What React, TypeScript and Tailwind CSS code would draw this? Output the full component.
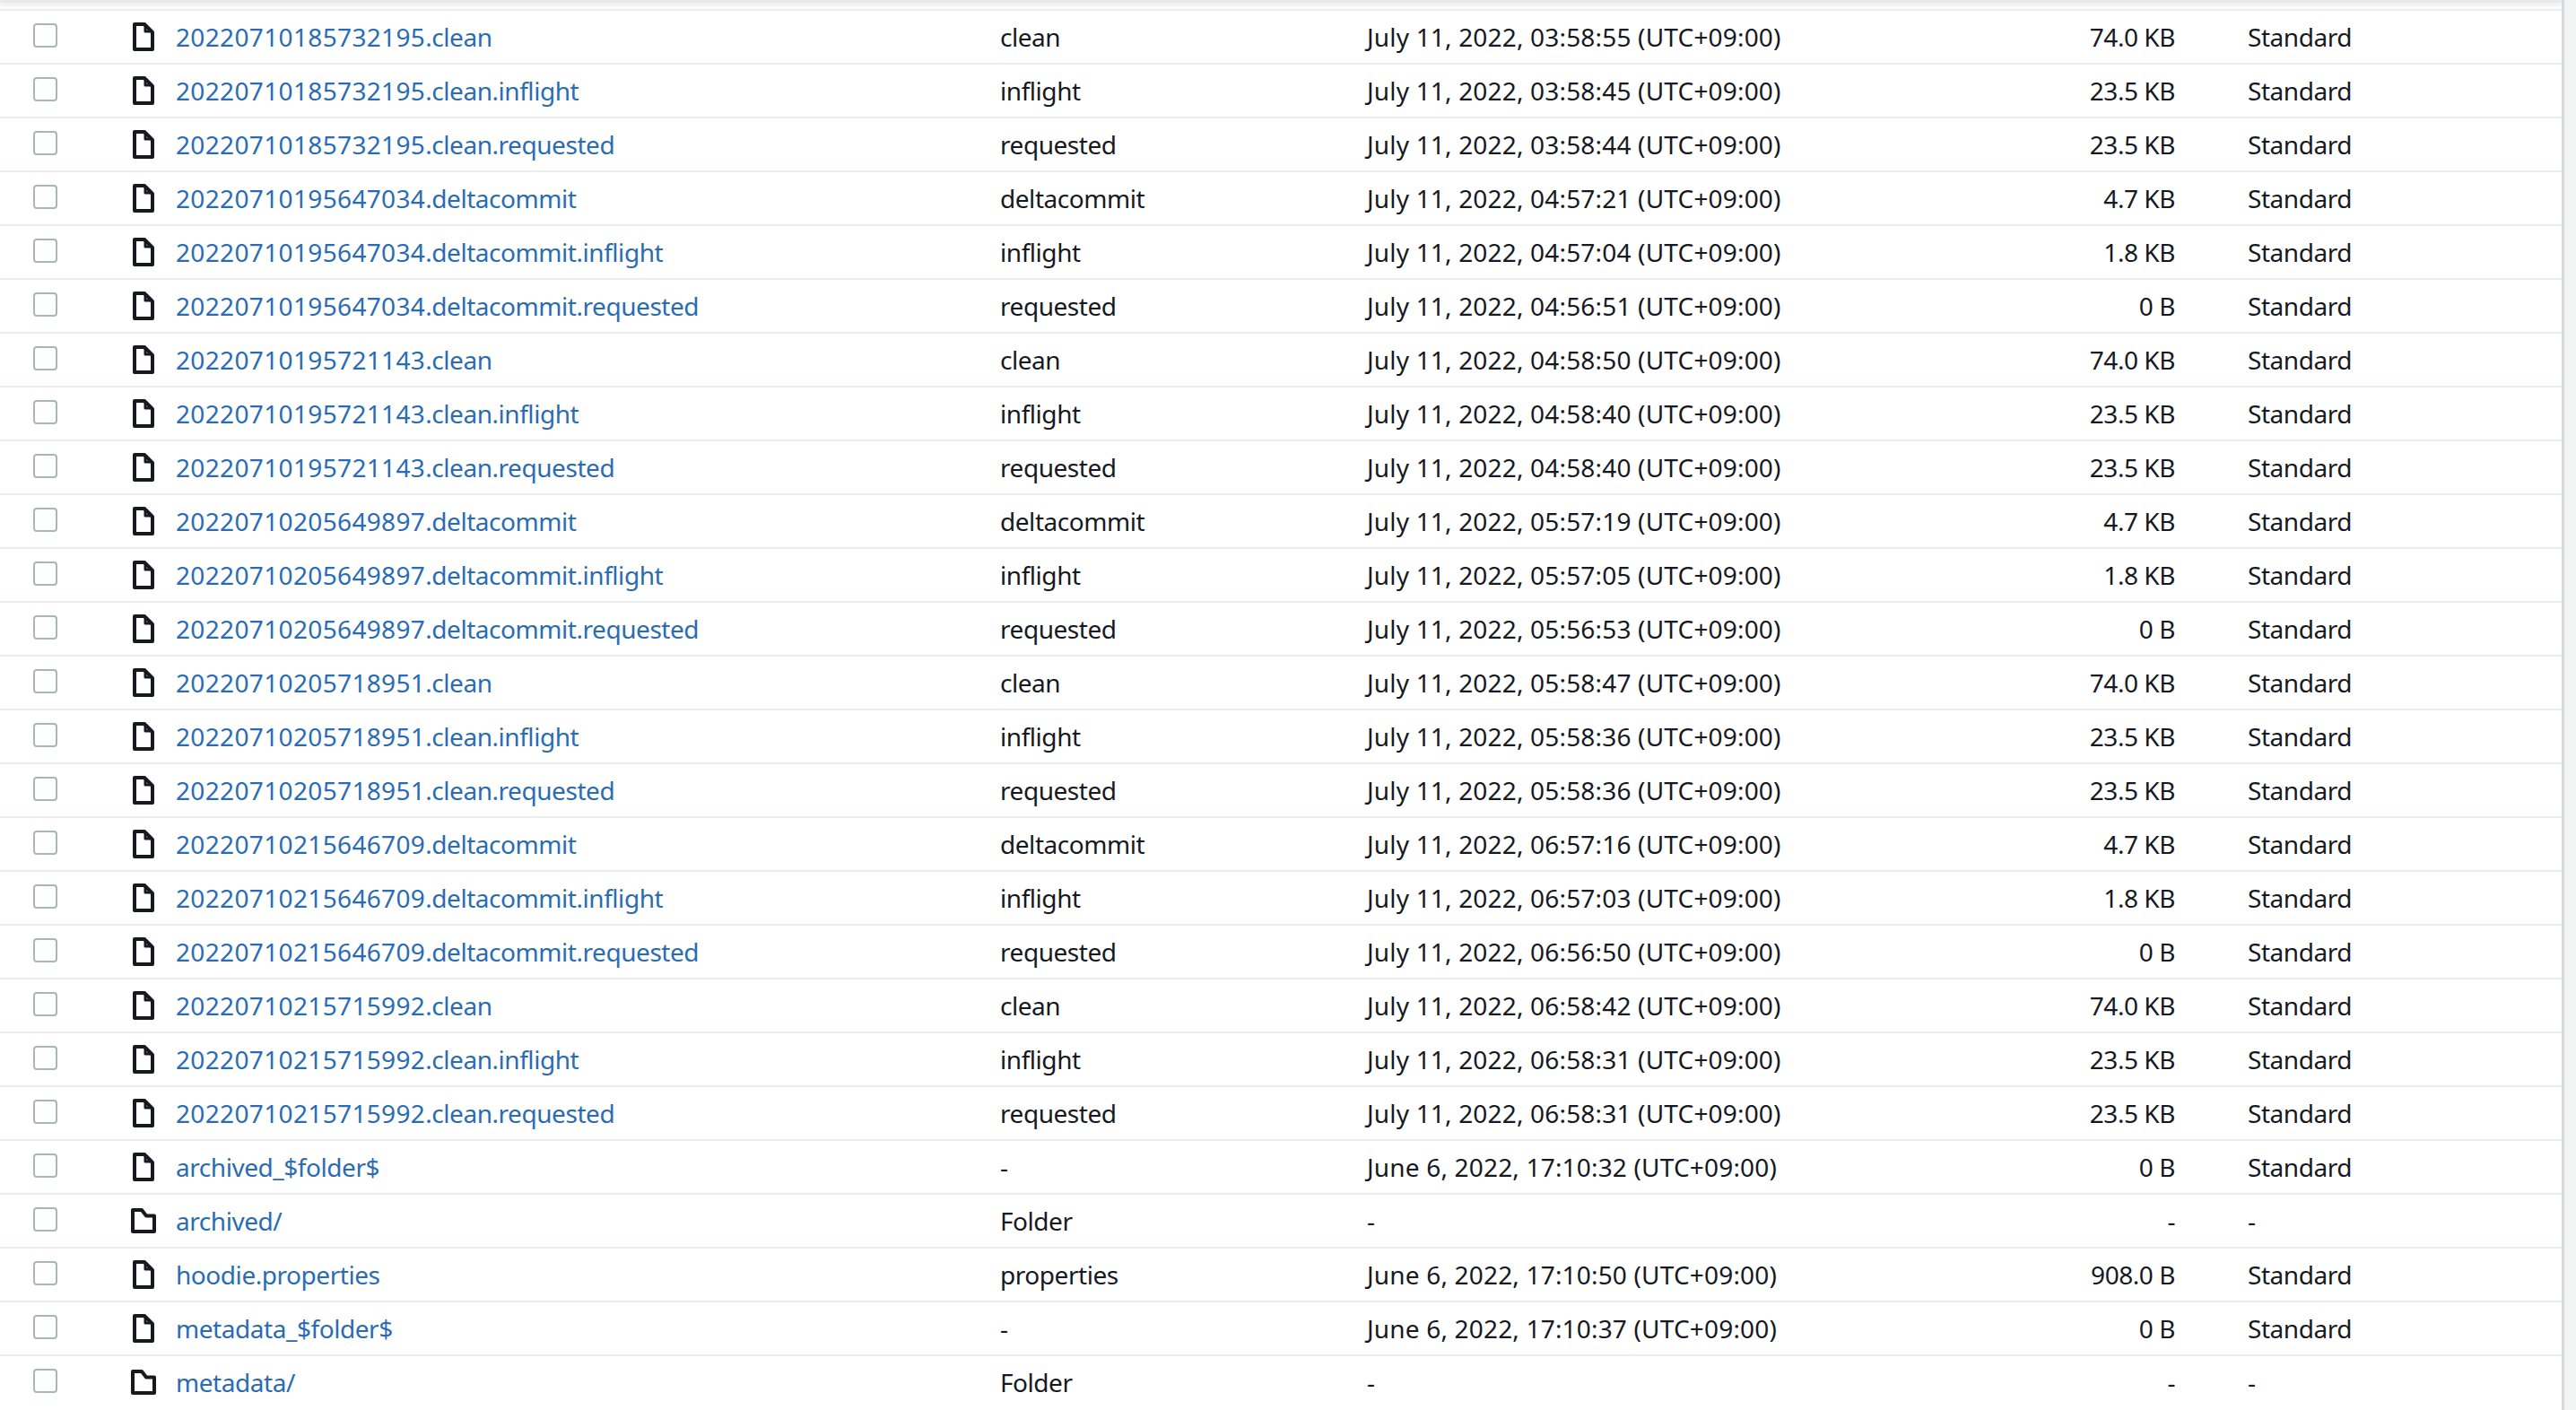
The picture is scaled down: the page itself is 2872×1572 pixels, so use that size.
const rows: [string, string, string, string, string, 'file' | 'folder'][] = [
  ['20220710185732195.clean', 'clean', 'July 11, 2022, 03:58:55 (UTC+09:00)', '74.0 KB', 'Standard', 'file'],
  ['20220710185732195.clean.inflight', 'inflight', 'July 11, 2022, 03:58:45 (UTC+09:00)', '23.5 KB', 'Standard', 'file'],
  ['20220710185732195.clean.requested', 'requested', 'July 11, 2022, 03:58:44 (UTC+09:00)', '23.5 KB', 'Standard', 'file'],
  ['20220710195647034.deltacommit', 'deltacommit', 'July 11, 2022, 04:57:21 (UTC+09:00)', '4.7 KB', 'Standard', 'file'],
  ['20220710195647034.deltacommit.inflight', 'inflight', 'July 11, 2022, 04:57:04 (UTC+09:00)', '1.8 KB', 'Standard', 'file'],
  ['20220710195647034.deltacommit.requested', 'requested', 'July 11, 2022, 04:56:51 (UTC+09:00)', '0 B', 'Standard', 'file'],
  ['20220710195721143.clean', 'clean', 'July 11, 2022, 04:58:50 (UTC+09:00)', '74.0 KB', 'Standard', 'file'],
  ['20220710195721143.clean.inflight', 'inflight', 'July 11, 2022, 04:58:40 (UTC+09:00)', '23.5 KB', 'Standard', 'file'],
  ['20220710195721143.clean.requested', 'requested', 'July 11, 2022, 04:58:40 (UTC+09:00)', '23.5 KB', 'Standard', 'file'],
  ['20220710205649897.deltacommit', 'deltacommit', 'July 11, 2022, 05:57:19 (UTC+09:00)', '4.7 KB', 'Standard', 'file'],
  ['20220710205649897.deltacommit.inflight', 'inflight', 'July 11, 2022, 05:57:05 (UTC+09:00)', '1.8 KB', 'Standard', 'file'],
  ['20220710205649897.deltacommit.requested', 'requested', 'July 11, 2022, 05:56:53 (UTC+09:00)', '0 B', 'Standard', 'file'],
  ['20220710205718951.clean', 'clean', 'July 11, 2022, 05:58:47 (UTC+09:00)', '74.0 KB', 'Standard', 'file'],
  ['20220710205718951.clean.inflight', 'inflight', 'July 11, 2022, 05:58:36 (UTC+09:00)', '23.5 KB', 'Standard', 'file'],
  ['20220710205718951.clean.requested', 'requested', 'July 11, 2022, 05:58:36 (UTC+09:00)', '23.5 KB', 'Standard', 'file'],
  ['20220710215646709.deltacommit', 'deltacommit', 'July 11, 2022, 06:57:16 (UTC+09:00)', '4.7 KB', 'Standard', 'file'],
  ['20220710215646709.deltacommit.inflight', 'inflight', 'July 11, 2022, 06:57:03 (UTC+09:00)', '1.8 KB', 'Standard', 'file'],
  ['20220710215646709.deltacommit.requested', 'requested', 'July 11, 2022, 06:56:50 (UTC+09:00)', '0 B', 'Standard', 'file'],
  ['20220710215715992.clean', 'clean', 'July 11, 2022, 06:58:42 (UTC+09:00)', '74.0 KB', 'Standard', 'file'],
  ['20220710215715992.clean.inflight', 'inflight', 'July 11, 2022, 06:58:31 (UTC+09:00)', '23.5 KB', 'Standard', 'file'],
  ['20220710215715992.clean.requested', 'requested', 'July 11, 2022, 06:58:31 (UTC+09:00)', '23.5 KB', 'Standard', 'file'],
  ['archived_$folder$', '-', 'June 6, 2022, 17:10:32 (UTC+09:00)', '0 B', 'Standard', 'file'],
  ['archived/', 'Folder', '-', '-', '-', 'folder'],
  ['hoodie.properties', 'properties', 'June 6, 2022, 17:10:50 (UTC+09:00)', '908.0 B', 'Standard', 'file'],
  ['metadata_$folder$', '-', 'June 6, 2022, 17:10:37 (UTC+09:00)', '0 B', 'Standard', 'file'],
  ['metadata/', 'Folder', '-', '-', '-', 'folder'],
];

function FileIcon() {
  return (
    <svg className="ml-[2px]" width="24" height="32" viewBox="0 0 24 32" fill="none" stroke="#16191f" strokeWidth="4" strokeLinejoin="round">
      <path d="M2 2h11l9 9v19H2z" />
      <path d="M14 2v8h8" strokeWidth="3" />
    </svg>
  );
}

function FolderIcon() {
  return (
    <svg width="28" height="28" viewBox="0 0 28 28" fill="none" stroke="#16191f" strokeWidth="4" strokeLinejoin="round">
      <path d="M2 2h10l5 6.4h9V26H2z" />
    </svg>
  );
}

function Name({ value }: { value: string }) {
  const match = value.match(/^(\d+)(.*)$/);
  if (!match) return <span>{value}</span>;
  return (
    <>
      <span className="tracking-[0.35px]">{match[1]}</span>
      <span>{match[2]}</span>
    </>
  );
}

export default function App() {
  return (
    <div className="flex h-[1572px] w-full overflow-hidden bg-white font-['Noto_Sans',sans-serif] text-[28px] tracking-[-0.45px] text-[#16191f]">
      <div className="min-w-0 flex-1">
        <div className="h-[3px] bg-[#e8e8e8] shadow-[0_2px_6px_rgba(0,0,0,0.18)]" />
        <div className="h-[7px]" />
        {rows.map((r) => (
          <div key={r[0]} className="flex h-[60px] items-center border-t-2 border-[#eaeded]">
            <div className="flex w-[146px] shrink-0 pb-[3px] pl-[37px]">
              <div className="h-[27px] w-[27px] rounded-[4px] border-2 border-[#aab7b8] bg-white" />
            </div>
            <div className="flex w-[50px] shrink-0">
              {r[5] === 'file' ? <FileIcon /> : <FolderIcon />}
            </div>
            <a className="w-[919px] shrink-0 whitespace-nowrap text-[#2a6cb3]">
              <Name value={r[0]} />
            </a>
            <div className="w-[409px] shrink-0 whitespace-nowrap">{r[1]}</div>
            <div className="w-[701px] shrink-0 whitespace-nowrap tracking-[0.18px]">{r[2]}</div>
            <div className="w-[200px] shrink-0 whitespace-nowrap text-right">{r[3]}</div>
            <div className="ml-[81px] whitespace-nowrap">{r[4]}</div>
          </div>
        ))}
      </div>
      <div className="w-[16px] shrink-0 border-l-[3px] border-[#d5dbdb] bg-[#f2f3f3]" />
    </div>
  );
}
